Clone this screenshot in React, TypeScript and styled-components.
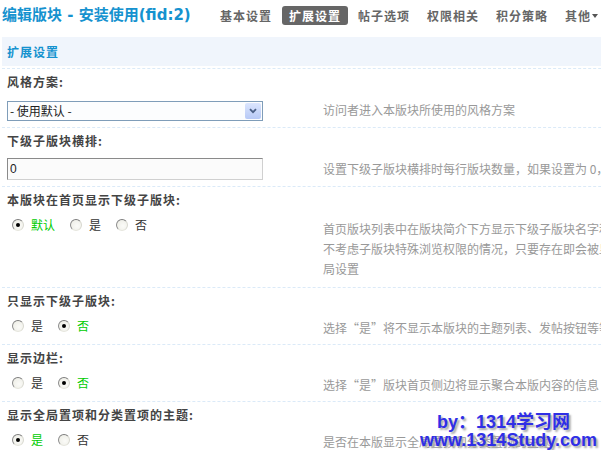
import React from "react";
import styled, { createGlobalStyle } from "styled-components";

const GlobalStyle = createGlobalStyle`
  html, body { margin: 0; padding: 0; overflow: hidden; background: #fff; }
  body {
    font-family: "Noto Sans CJK SC", "Liberation Sans", sans-serif;
    font-size: 12px;
    line-height: 1.5;
    color: #333;
  }
`;

const Page = styled.div`
  position: relative;
  width: 1000px;
  height: 450px;
  padding-left: 2px;
`;

const Header = styled.div`
  display: flex;
  align-items: flex-start;
  height: 37px;
  padding-top: 6px;
  box-sizing: border-box;
`;

const Title = styled.h3`
  margin: 0;
  flex: 0 0 211px;
  font: bold 15px/19px "DejaVu Sans", "Noto Sans CJK SC", sans-serif;
  color: #1592cf;
  white-space: nowrap;
`;

const Tabs = styled.ul`
  list-style: none;
  margin: 0;
  padding: 0;
  display: flex;
  gap: 3px;
`;

const Tab = styled.li<{ $active?: boolean }>`
  display: flex;
  align-items: center;
  height: 19px;
  line-height: 19px;
  padding: 0 7px;
  border-radius: 3px;
  font-size: 12px;
  font-weight: bold;
  letter-spacing: 1px;
  white-space: nowrap;
  color: ${(p) => (p.$active ? "#fff" : "#666")};
  background: ${(p) => (p.$active ? "#666" : "transparent")};
`;

const Caret = styled.span`
  display: inline-block;
  width: 0;
  height: 0;
  margin-left: 1px;
  border-left: 3px solid transparent;
  border-right: 3px solid transparent;
  border-top: 4px solid #555;
`;

const Band = styled.div`
  height: 29px;
  line-height: 29px;
  margin-bottom: 2px;
  padding-left: 5px;
  background: #f0f5fc;
  color: #1592cf;
  font-weight: bold;
  letter-spacing: 1px;
`;

const Setting = styled.div`
  border-top: 1px dashed #dbeaf8;
`;

const Label = styled.div`
  height: 24px;
  box-sizing: border-box;
  padding: 4px 0 0 5px;
  line-height: 18px;
  font-weight: bold;
  letter-spacing: 1px;
  color: #444;
  white-space: nowrap;
`;

const ValueRow = styled.div`
  display: grid;
  grid-template-columns: 321px auto;
  align-items: center;
`;

const Control = styled.div<{ $pt: number; $pb: number }>`
  align-self: start;
  padding: ${(p) => p.$pt}px 0 ${(p) => p.$pb}px 5px;
`;

const Desc = styled.div<{ $pad?: number }>`
  color: #999;
  line-height: 20px;
  white-space: nowrap;
  padding: ${(p) => p.$pad ?? 0}px 0;
`;

const SelectBox = styled.div`
  width: 256px;
  height: 20px;
  box-sizing: border-box;
  border: 1px solid #7f9db9;
  background: #fcfdfe;
  display: flex;
  align-items: center;
  justify-content: space-between;
  padding-left: 2px;
  color: #222;
  line-height: 18px;
`;

const SelectButton = styled.span`
  width: 16px;
  height: 16px;
  margin-right: 1px;
  border-radius: 2px;
  background: linear-gradient(#dbe5fd, #b7c9f6);
  display: flex;
  align-items: center;
  justify-content: center;
`;

const TextInput = styled.input`
  display: block;
  width: 256px;
  height: 22px;
  box-sizing: border-box;
  margin: 0;
  padding: 0 2px;
  border: 1px solid;
  border-color: #8a8a8a #d0d0d0 #d0d0d0 #8a8a8a;
  background: #fbfbfb;
  font-family: "Liberation Sans", "Noto Sans CJK SC", sans-serif;
  font-size: 12px;
  color: #222;
  outline: none;
`;

const RadioGroup = styled.div`
  display: flex;
  align-items: center;
  height: 20px;
`;

const RadioItem = styled.span<{ $checked?: boolean }>`
  display: flex;
  align-items: center;
  margin-right: 10px;
  line-height: 20px;
  color: ${(p) => (p.$checked ? "#00cc00" : "#333")};
`;

const RadioMark = styled.span<{ $checked?: boolean }>`
  position: relative;
  width: 12px;
  height: 12px;
  box-sizing: border-box;
  margin: 0 7px 0 5px;
  border-radius: 50%;
  border: 1px solid;
  border-color: #7c7c7c #d8d8d0 #e6e6de #8c8c8c;
  background: radial-gradient(circle at 60% 60%, #fbfbf8 0%, #ebebe3 100%);
  &::after {
    content: "";
    display: ${(p) => (p.$checked ? "block" : "none")};
    position: absolute;
    left: 3px;
    top: 3px;
    width: 4px;
    height: 4px;
    border-radius: 50%;
    background: #000;
  }
`;

const Watermark = styled.div`
  position: absolute;
  left: 420px;
  top: 413px;
  font: bold 18px/18px "Liberation Sans", "Noto Sans CJK SC", sans-serif;
  color: #2f2fe6;
  text-shadow: 2px 2px 2px #a8a8a8;
  white-space: nowrap;
`;

const WatermarkLine = styled.div<{ $indent: number }>`
  padding-left: ${(p) => p.$indent}px;
`;

type RadioOpt = { label: string; checked?: boolean };

const Radios = ({ options }: { options: RadioOpt[] }) => (
  <RadioGroup>
    {options.map((o) => (
      <RadioItem key={o.label} $checked={o.checked}>
        <RadioMark $checked={o.checked} />
        {o.label}
      </RadioItem>
    ))}
  </RadioGroup>
);

const Chevron = () => (
  <svg width="8" height="6" viewBox="0 0 8 6">
    <path d="M1 1.2 L4 4.2 L7 1.2" fill="none" stroke="#4a5f86" strokeWidth="1.8" />
  </svg>
);

export default function App() {
  return (
    <>
      <GlobalStyle />
      <Page>
        <Header>
          <Title>编辑版块 - 安装使用(fid:2)</Title>
          <Tabs>
            <Tab>基本设置</Tab>
            <Tab $active>扩展设置</Tab>
            <Tab>帖子选项</Tab>
            <Tab>权限相关</Tab>
            <Tab>积分策略</Tab>
            <Tab>
              其他
              <Caret />
            </Tab>
          </Tabs>
        </Header>

        <Band>扩展设置</Band>

        <Setting>
          <Label>风格方案:</Label>
          <ValueRow>
            <Control $pt={8} $pb={6}>
              <SelectBox>
                <span>- 使用默认 -</span>
                <SelectButton>
                  <Chevron />
                </SelectButton>
              </SelectBox>
            </Control>
            <Desc>访问者进入本版块所使用的风格方案</Desc>
          </ValueRow>
        </Setting>

        <Setting>
          <Label>下级子版块横排:</Label>
          <ValueRow>
            <Control $pt={6} $pb={6}>
              <TextInput readOnly value="0" />
            </Control>
            <Desc>设置下级子版块横排时每行版块数量，如果设置为 0，则按系统默认方式排列</Desc>
          </ValueRow>
        </Setting>

        <Setting>
          <Label>本版块在首页显示下级子版块:</Label>
          <ValueRow>
            <Control $pt={4} $pb={8}>
              <Radios
                options={[
                  { label: "默认", checked: true },
                  { label: "是" },
                  { label: "否" },
                ]}
              />
            </Control>
            <Desc $pad={8}>
              首页版块列表中在版块简介下方显示下级子版块名字和地址（如果存在的话）。注意：本功能
              <br />
              不考虑子版块特殊浏览权限的情况，只要存在即会被显示出来。选择“默认”将使用全
              <br />
              局设置
            </Desc>
          </ValueRow>
        </Setting>

        <Setting>
          <Label>只显示下级子版块:</Label>
          <ValueRow>
            <Control $pt={4} $pb={8}>
              <Radios options={[{ label: "是" }, { label: "否", checked: true }]} />
            </Control>
            <Desc>选择“是”将不显示本版块的主题列表、发帖按钮等等，只显示下级子版块</Desc>
          </ValueRow>
        </Setting>

        <Setting>
          <Label>显示边栏:</Label>
          <ValueRow>
            <Control $pt={4} $pb={8}>
              <Radios options={[{ label: "是" }, { label: "否", checked: true }]} />
            </Control>
            <Desc>选择“是”版块首页侧边将显示聚合本版内容的信息</Desc>
          </ValueRow>
        </Setting>

        <Setting>
          <Label>显示全局置项和分类置项的主题:</Label>
          <ValueRow>
            <Control $pt={4} $pb={8}>
              <Radios options={[{ label: "是", checked: true }, { label: "否" }]} />
            </Control>
            <Desc>是否在本版显示全局置顶和分类置顶的主题</Desc>
          </ValueRow>
        </Setting>

        <Watermark>
          <WatermarkLine $indent={17}>by：1314学习网</WatermarkLine>
          <WatermarkLine $indent={0}>www.1314Study.com</WatermarkLine>
        </Watermark>
      </Page>
    </>
  );
}
